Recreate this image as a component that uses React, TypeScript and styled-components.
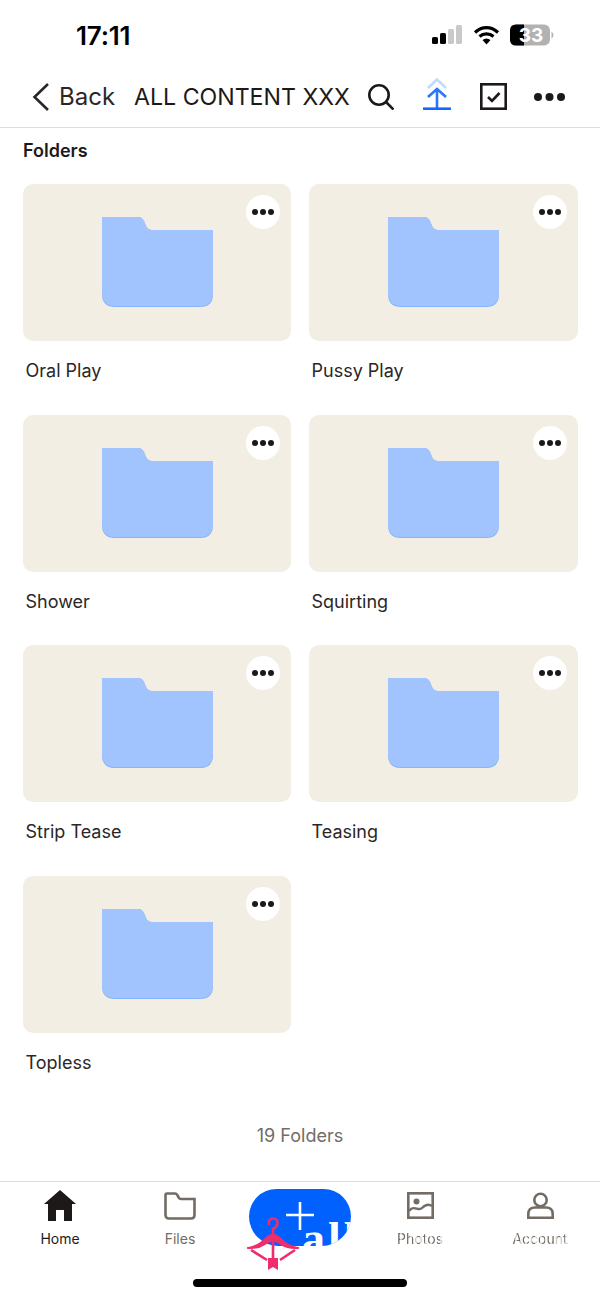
import styled, { createGlobalStyle } from 'styled-components';

const Global = createGlobalStyle`
  html, body { margin: 0; padding: 0; background: #fff; }
  body { font-family: Inter, "Liberation Sans", sans-serif; color: #1e1919; }
`;

const Screen = styled.div`
  width: 600px;
  height: 1298px;
  display: flex;
  flex-direction: column;
  overflow: hidden;
  position: relative;
`;

const StatusBar = styled.div`
  height: 70px;
  display: flex;
  justify-content: space-between;
  align-items: flex-start;
  padding: 21px 46px 0 76px;
  box-sizing: border-box;
`;

const Time = styled.div`
  font-size: 26px;
  line-height: 30px;
  font-weight: 600;
  color: #000;
  letter-spacing: -0.2px;
`;

const StatusIcons = styled.div`
  display: flex;
  align-items: center;
  gap: 10px;
  padding-top: 3px;
`;

const NavBar = styled.div`
  height: 58px;
  display: flex;
  align-items: center;
  border-bottom: 1px solid #dedddb;
  padding: 0 0 4px 31px;
  box-sizing: border-box;
`;

const BackLink = styled.div`
  display: flex;
  align-items: center;
  gap: 10px;
  font-size: 24px;
  color: #2b2727;
  width: 103px;
`;

const Title = styled.div`
  font-size: 23.15px;
  color: #1e1919;
  white-space: nowrap;
  width: 234px;
`;

const NavIcons = styled.div`
  display: flex;
  align-items: center;
  gap: 29px;
`;

const UploadIcon = styled.svg`
  margin-bottom: 6px;
`;

const MoreIcon = styled.svg`
  margin-left: -2px;
`;

const SectionTitle = styled.div`
  font-size: 18px;
  line-height: 22px;
  font-weight: 600;
  margin: 12px 0 0 23px;
`;

const Grid = styled.div`
  display: grid;
  grid-template-columns: 268px 269px;
  column-gap: 18px;
  margin: 22px 0 0 23px;
`;

const Item = styled.div`
  height: 230.5px;
`;

const Thumb = styled.div`
  height: 157px;
  border-radius: 10px;
  background: #f3eee4;
  position: relative;
  display: flex;
  justify-content: center;
  padding-top: 33px;
  box-sizing: border-box;
`;

const MoreButton = styled.div`
  position: absolute;
  top: 11px;
  right: 11px;
  width: 34px;
  height: 34px;
  border-radius: 50%;
  background: #fff;
  display: flex;
  align-items: center;
  justify-content: center;
  gap: 2px;
`;

const Dot = styled.span`
  width: 6px;
  height: 6px;
  border-radius: 50%;
  background: #1e1919;
`;

const ItemName = styled.div`
  font-size: 18px;
  line-height: 22px;
  margin: 19px 0 0 2.5px;
  color: #2b2727;
`;

const Count = styled.div`
  text-align: center;
  font-size: 18px;
  line-height: 22px;
  color: #736c64;
  margin-top: 19px;
`;

const TabBar = styled.div`
  position: absolute;
  left: 0;
  right: 0;
  top: 1181px;
  height: 117px;
  border-top: 1px solid #dedddb;
  box-sizing: border-box;
  display: grid;
  grid-template-columns: repeat(5, 120px);
`;

const Tab = styled.div<{ $active?: boolean }>`
  display: flex;
  flex-direction: column;
  align-items: center;
  padding-top: 5px;
  font-size: 14px;
  color: ${(p) => (p.$active ? '#1e1919' : '#736c64')};
`;

const TabIcon = styled.div`
  height: 37px;
  display: flex;
  align-items: center;
  margin-bottom: 6px;
`;

const TabLabel = styled.div<{ $faded?: boolean }>`
  line-height: 18px;
  ${(p) =>
    p.$faded &&
    `
    -webkit-mask-image: repeating-linear-gradient(90deg, #000 0 3px, rgba(0,0,0,.35) 3px 5px);
    mask-image: repeating-linear-gradient(90deg, #000 0 3px, rgba(0,0,0,.35) 3px 5px);
  `}
`;

const AddPill = styled.div`
  position: absolute;
  left: 249px;
  top: 1189px;
  width: 102px;
  height: 57px;
  border-radius: 28px 28px 30px 30px;
  background: #0061fe;
  overflow: hidden;
`;

const PillText = styled.div`
  position: absolute;
  left: 53px;
  top: 25px;
  font-family: "Liberation Serif", serif;
  font-size: 46px;
  font-weight: 700;
  line-height: 50px;
  color: #fff;
  letter-spacing: 3px;
`;

const Hanger = styled.svg`
  position: absolute;
  left: 246px;
  top: 1216px;
`;

const PlusIcon = styled.svg`
  position: absolute;
  left: 285px;
  top: 1202px;
`;

const HomeIndicator = styled.div`
  position: absolute;
  left: 193px;
  top: 1279px;
  width: 214px;
  height: 8px;
  border-radius: 4px;
  background: #000;
`;

const FolderIcon = () => (
  <svg width="111" height="90" viewBox="0 0 111 90">
    <path d="M0 0H36Q40 0 42 4L44 9Q46 13 50 13H111V77Q111 90 98 90H13Q0 90 0 77Z" fill="#85b3fc" />
    <path d="M0 0H36Q40 0 42 4L44 9Q46 13 50 13H111V75Q111 89 98 89H13Q0 89 0 75Z" fill="#a1c4ff" />
  </svg>
);

const names = ['Oral Play', 'Pussy Play', 'Shower', 'Squirting', 'Strip Tease', 'Teasing', 'Topless'];

export default function App() {
  return (
    <Screen>
      <Global />
      <StatusBar>
        <Time>17:11</Time>
        <StatusIcons>
          <svg width="31" height="20" viewBox="0 0 31 20">
            <rect x="0" y="12" width="6" height="7" rx="1.5" fill="#000" />
            <rect x="8" y="8" width="6" height="11" rx="1.5" fill="#000" />
            <rect x="16" y="4" width="6" height="15" rx="1.5" fill="#c9c9c9" />
            <rect x="24" y="0" width="6" height="19" rx="1.5" fill="#c9c9c9" />
          </svg>
          <svg width="27" height="20" viewBox="0 0 27 20">
            <path d="M2 7.5C9 1 18 1 25 7.5" fill="none" stroke="#000" strokeWidth="3.2" />
            <path d="M6.5 11.5C10.5 8 16.5 8 20.5 11.5" fill="none" stroke="#000" strokeWidth="3.2" />
            <path d="M13.5 19.5L9.5 15C12 13 15 13 17.5 15Z" fill="#000" />
          </svg>
          <svg width="44" height="22" viewBox="0 0 44 22">
            <rect x="0" y="0.5" width="40" height="21" rx="6" fill="#b2b2b2" />
            <path d="M6 0.5H14V21.5H6Q0 21.5 0 15.5V6.5Q0 0.5 6 0.5Z" fill="#000" />
            <text x="21" y="17.5" textAnchor="middle" fontFamily="Inter, sans-serif" fontSize="19" fontWeight="700" fill="#fff">33</text>
            <path d="M41.5 7.5Q43.5 9 43.5 11T41.5 14.5Z" fill="#b2b2b2" />
          </svg>
        </StatusIcons>
      </StatusBar>

      <NavBar>
        <BackLink>
          <svg width="18" height="30" viewBox="0 0 18 30">
            <path d="M17 2L3.5 15L17 28" fill="none" stroke="#2b2727" strokeWidth="2.6" />
          </svg>
          Back
        </BackLink>
        <Title>ALL CONTENT XXX</Title>
        <NavIcons>
          <svg width="26" height="26" viewBox="0 0 26 26">
            <circle cx="11" cy="11" r="9.7" fill="none" stroke="#1e1919" strokeWidth="2.6" />
            <path d="M17.5 17.5L25.5 25.5" fill="none" stroke="#1e1919" strokeWidth="2.6" />
          </svg>
          <UploadIcon width="28" height="32" viewBox="0 0 28 32">
            <path d="M5 10L14 1.5L23 10" fill="none" stroke="#c3d9ff" strokeWidth="2.6" />
            <path d="M5 19L14 11L23 19" fill="none" stroke="#2a76fb" strokeWidth="2.6" />
            <path d="M14 11V30" fill="none" stroke="#2a76fb" strokeWidth="2.6" />
            <path d="M0 30.7H28" fill="none" stroke="#0f6bff" strokeWidth="2.6" />
          </UploadIcon>
          <svg width="27" height="27" viewBox="0 0 27 27">
            <rect x="1.3" y="1.3" width="24.4" height="24.4" fill="none" stroke="#1e1919" strokeWidth="2.6" />
            <path d="M8 14L12 18L19.5 10" fill="none" stroke="#1e1919" strokeWidth="2.6" />
          </svg>
          <MoreIcon width="31" height="10" viewBox="0 0 31 10">
            <circle cx="4" cy="5" r="4" fill="#1e1919" />
            <circle cx="15.5" cy="5" r="4" fill="#1e1919" />
            <circle cx="27" cy="5" r="4" fill="#1e1919" />
          </MoreIcon>
        </NavIcons>
      </NavBar>

      <SectionTitle>Folders</SectionTitle>
      <Grid>
        {names.map((name) => (
          <Item key={name}>
            <Thumb>
              <FolderIcon />
              <MoreButton>
                <Dot />
                <Dot />
                <Dot />
              </MoreButton>
            </Thumb>
            <ItemName>{name}</ItemName>
          </Item>
        ))}
      </Grid>
      <Count>19 Folders</Count>

      <TabBar>
        <Tab $active>
          <TabIcon>
            <svg width="32" height="31" viewBox="0 0 32 31">
              <path d="M16 0L32 14H28V31H20V20H12V31H4V14H0Z" fill="#1e1919" />
            </svg>
          </TabIcon>
          <TabLabel>Home</TabLabel>
        </Tab>
        <Tab>
          <TabIcon>
            <svg width="32" height="28" viewBox="0 0 32 28">
              <path d="M1.5 3Q1.5 1.5 3 1.5H11Q12.5 1.5 13.3 3L15 6Q15.5 7 17 7H30.5V23Q30.5 26.5 27 26.5H5Q1.5 26.5 1.5 23Z" fill="none" stroke="#736c64" strokeWidth="2.6" />
            </svg>
          </TabIcon>
          <TabLabel>Files</TabLabel>
        </Tab>
        <div />
        <Tab>
          <TabIcon>
            <svg width="27" height="27" viewBox="0 0 27 27">
              <rect x="1.3" y="1.3" width="24.4" height="24.4" fill="none" stroke="#736c64" strokeWidth="2.6" />
              <circle cx="9.5" cy="9.5" r="3" fill="#736c64" />
              <path d="M2 19C7 12 11 20 15 16C18 13 21 11 25 14" fill="none" stroke="#736c64" strokeWidth="2.4" />
            </svg>
          </TabIcon>
          <TabLabel $faded>Photos</TabLabel>
        </Tab>
        <Tab>
          <TabIcon>
            <svg width="27" height="27" viewBox="0 0 27 27">
              <circle cx="13.5" cy="8" r="6.2" fill="none" stroke="#736c64" strokeWidth="2.6" />
              <path d="M1.3 25.7V22Q1.3 15.5 8 15.5H19Q25.7 15.5 25.7 22V25.7Z" fill="none" stroke="#736c64" strokeWidth="2.6" />
            </svg>
          </TabIcon>
          <TabLabel $faded>Account</TabLabel>
        </Tab>
      </TabBar>

      <AddPill>
        <PillText>all</PillText>
      </AddPill>
      <PlusIcon width="30" height="28" viewBox="0 0 30 28">
        <path d="M15 0V28M1 13H29" fill="none" stroke="#fff" strokeWidth="2.6" />
      </PlusIcon>
      <Hanger width="54" height="56" viewBox="0 0 54 56">
        <path d="M23 9Q22 2.5 27 2.5Q32 2.5 31.5 7.5Q31 11 27 13V18" fill="none" stroke="#f02d6c" strokeWidth="2.6" />
        <path d="M1 32Q13 30 20 22Q27 15 34 22Q41 30 53 32Q42 33 35 28Q27 22 19 28Q12 33 1 32Z" fill="#f02d6c" stroke="#f02d6c" strokeWidth="1.6" />
        <path d="M27 20V44" fill="none" stroke="#f02d6c" strokeWidth="2.6" />
        <path d="M5 34L21 44M49 34L34 44" fill="none" stroke="#f02d6c" strokeWidth="2.6" />
        <path d="M22 42H32V54L27 51L22 54Z" fill="#f02d6c" />
      </Hanger>
      <HomeIndicator />
    </Screen>
  );
}
